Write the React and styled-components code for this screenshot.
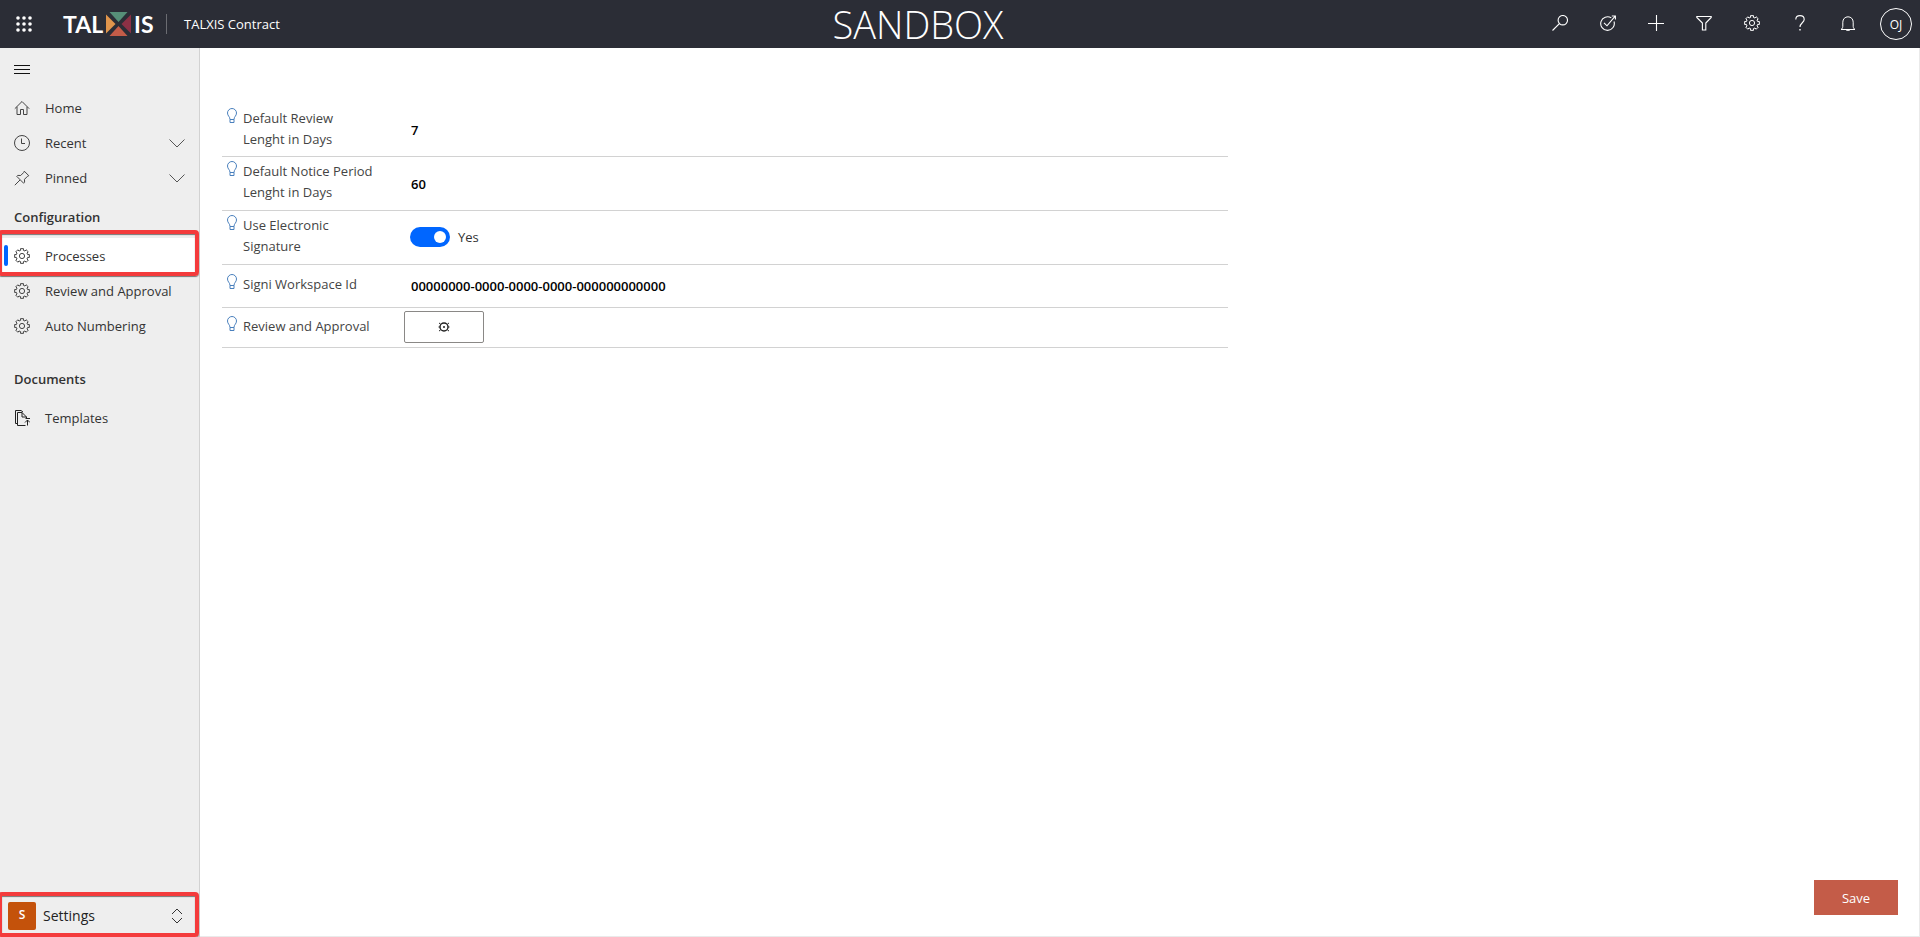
import React, { useState } from "react";
import styled, { createGlobalStyle, css } from "styled-components";

const GlobalStyle = createGlobalStyle`
  *, *::before, *::after { box-sizing: border-box; }
  body {
    margin: 0;
    font-family: "Segoe UI", "Open Sans", "Noto Sans", sans-serif;
    font-size: 13px;
    color: #333;
    background: #fff;
  }
  button, input { font: inherit; color: inherit; }
`;

const Page = styled.div`
  display: flex;
  flex-direction: column;
  min-height: 100vh;
`;

const Header = styled.header`
  display: flex;
  align-items: center;
  height: 48px;
  background: #2b2d36;
  color: #fff;
`;

const Brand = styled.div`
  display: flex;
  align-items: center;
  width: 300px;
`;

const IconButton = styled.button`
  display: flex;
  align-items: center;
  justify-content: center;
  width: 48px;
  height: 48px;
  padding: 0;
  border: 0;
  background: none;
  cursor: pointer;
`;

const ActionButton = styled(IconButton)`
  padding-bottom: 2px;
`;

const Logo = styled.a`
  display: flex;
  align-items: center;
  gap: 3px;
  width: 102px;
  height: 24px;
  margin-left: 15px;
  color: #fff;
  text-decoration: none;
  font: 700 23px/24px Lato, sans-serif;
`;

const AppName = styled.span`
  display: flex;
  align-items: center;
  gap: 17px;
  height: 20px;
  margin-left: 1px;
  line-height: 20px;
  white-space: nowrap;
  &::before {
    content: "";
    width: 1px;
    height: 20px;
    background: #6b6c72;
  }
`;

const Banner = styled.div`
  flex: 1;
  text-align: center;
  font-size: 38px;
  font-weight: 300;
  line-height: 46px;
`;

const HeaderActions = styled.div`
  display: flex;
`;

const Avatar = styled.span`
  display: flex;
  align-items: center;
  justify-content: center;
  width: 32px;
  height: 32px;
  border: 1px solid #fff;
  border-radius: 50%;
  font-size: 12px;
`;

const Body = styled.div`
  display: flex;
  flex: 1;
`;

const Sidebar = styled.nav`
  display: flex;
  flex-direction: column;
  width: 200px;
  flex-shrink: 0;
  background: #eee;
  border-right: 1px solid #d2d2d2;
`;

const MenuToggle = styled.button`
  display: flex;
  align-items: center;
  height: 42px;
  padding: 0 14px;
  border: 0;
  background: none;
`;

const NavList = styled.ul`
  list-style: none;
  margin: 0;
  padding: 0 0 1px;
`;

const GroupTitle = styled.h2`
  margin: 0;
  padding: 0 14px;
  font-size: 13px;
  font-weight: 600;
  line-height: 42px;
`;

const Group = styled.section`
  & + & { padding-top: 14px; }
`;

const highlight = css`
  content: "";
  position: absolute;
  left: -2px;
  right: 0;
  border: 4px solid #f43b3c;
  border-radius: 4px;
  box-shadow: 0 1px 1px #777, inset 0 1px 1px #777;
  pointer-events: none;
`;

const NavRow = styled.li`
  position: relative;
  background: ${(p) => (p.$active ? "#fff" : "none")};
  ${(p) =>
    p.$active &&
    css`
      &::after {
        ${highlight}
        top: -8px;
        bottom: -3px;
      }
    `}
`;

const NavItem = styled.a`
  display: grid;
  grid-template-columns: 16px 1fr 16px;
  align-items: center;
  column-gap: 15px;
  height: 35px;
  padding: 0 14px;
  color: inherit;
  text-decoration: none;
  white-space: nowrap;
`;

const ActiveBar = styled.span`
  position: absolute;
  left: 4px;
  top: 7px;
  width: 4px;
  height: 21px;
  border-radius: 2px;
  background: #0066ff;
`;

const AreaSwitcher = styled.button`
  position: relative;
  display: grid;
  grid-template-columns: 28px 1fr 16px;
  align-items: center;
  column-gap: 7px;
  height: 43px;
  margin-top: auto;
  padding: 0 14px 0 8px;
  border: 0;
  background: none;
  color: #222;
  font-size: 14px;
  text-align: left;
  &::after {
    ${highlight}
    top: -2px;
    bottom: 0;
  }
`;

const AreaBadge = styled.span`
  height: 28px;
  border-radius: 2px;
  background: #c4520b;
  color: #fff;
  font-size: 12px;
  font-weight: 600;
  line-height: 26px;
  text-align: center;
`;

const Main = styled.main`
  display: flex;
  flex: 1;
  flex-direction: column;
  justify-content: space-between;
  min-width: 0;
  padding: 55px 21px 21px 22px;
  border: solid #eaeaea;
  border-width: 0 1px 1px 0;
`;

const Fields = styled.div`
  width: 60%;
`;

const Field = styled.div`
  display: flex;
  min-height: ${(p) => p.$height}px;
  padding-left: 5px;
  border-bottom: 1px solid #d2d2d2;
`;

const FieldLabel = styled.label`
  display: grid;
  grid-template-columns: 10px 132px;
  column-gap: 6px;
  align-items: start;
  width: 177px;
  padding-top: ${(p) => p.$top}px;
  color: #444;
  line-height: 21px;
`;

const FieldValue = styled.div`
  display: flex;
  flex: 1;
  align-items: center;
`;

const TextInput = styled.input`
  width: 100%;
  height: 32px;
  padding: 0 7px;
  border: 0;
  background: none;
  color: #000;
  font-weight: 600;
`;

const SwitchLabel = styled.label`
  display: flex;
  align-items: center;
  gap: 8px;
  padding: 0 0 2px 6px;
`;

const Switch = styled.input`
  appearance: none;
  display: flex;
  align-items: center;
  justify-content: ${(p) => (p.checked ? "flex-end" : "flex-start")};
  width: 40px;
  height: 20px;
  margin: 0;
  padding: 0 4px;
  border-radius: 10px;
  background: ${(p) => (p.checked ? "#0066ff" : "#8a8886")};
  &::before {
    content: "";
    width: 12px;
    height: 12px;
    border-radius: 50%;
    background: #fff;
  }
`;

const OutlineButton = styled.button`
  display: flex;
  align-items: center;
  justify-content: center;
  width: 80px;
  height: 32px;
  margin-bottom: 2px;
  border: 1px solid #8a8886;
  border-radius: 2px;
  background: #fff;
`;

const SaveButton = styled.button`
  align-self: flex-end;
  width: 84px;
  height: 35px;
  border: 0;
  background: #c45c48;
  color: #fff;
`;

const Icon = ({ size = 16, color = "#fff", children, w, h }) => (
  <svg width={w || size} height={h || size} viewBox={`0 0 ${w || size} ${h || size}`} fill="none" stroke={color} strokeWidth="1" aria-hidden="true">
    {children}
  </svg>
);

const gearPath = (() => {
  const teeth = 8;
  const pts = [];
  for (let i = 0; i < teeth; i++) {
    const a = (i * 2 * Math.PI) / teeth;
    [[-0.24, 5.8], [-0.2, 7.5], [0.2, 7.5], [0.24, 5.8]].forEach(([d, r]) => {
      pts.push(`${(8 + r * Math.sin(a + d)).toFixed(2)} ${(8 - r * Math.cos(a + d)).toFixed(2)}`);
    });
  }
  return `M${pts.join("L")}Z`;
})();

const Gear = ({ color = "#444" }) => (
  <Icon color={color}>
    <path d={gearPath} strokeLinejoin="round" />
    <circle cx="8" cy="8" r="2.6" />
  </Icon>
);

const Waffle = () => (
  <Icon>
    {[2, 8, 14].map((y) => [2, 8, 14].map((x) => <circle key={`${x}-${y}`} cx={x} cy={y} r="1.8" fill="#fff" stroke="none" />))}
  </Icon>
);

const LogoMark = () => (
  <svg width="25" height="24" viewBox="0 0 25 24" aria-hidden="true">
    <path d="M3.5 0h18L12.5 10z" fill="#568f78" />
    <path d="M0 2.5v19L9.5 12z" fill="#e0954c" />
    <path d="M25 2.5v19L15.5 12z" fill="#8c3045" />
    <path d="M3.5 24h18L12.5 14z" fill="#c45c48" />
  </svg>
);

const Search = () => (
  <Icon>
    <circle cx="10.8" cy="5.2" r="4.7" strokeWidth="1.1" />
    <path d="M7.4 8.6L.5 15.5" strokeWidth="1.1" />
  </Icon>
);
const Target = () => (
  <Icon>
    <path d="M11.3 2.9A6.8 6.8 0 1 0 14 6.5" strokeWidth="1.1" />
    <path d="M4 7.8l3 3L15.2 1.2M11.8 1h3.6v3.5" strokeWidth="1.1" />
  </Icon>
);
const Plus = () => (
  <Icon>
    <path d="M8.5 0v16M0 8.5h16" strokeWidth="1.1" />
  </Icon>
);
const Filter = () => (
  <Icon>
    <path d="M.8 1.5h14.4v1L9.8 8v7H6.4V8L.8 2.5z" strokeWidth="1.1" />
  </Icon>
);
const Help = () => (
  <Icon w={10} h={16}>
    <path d="M.8 4.4C.8 2 2.5.6 5 .6s4.2 1.5 4.2 3.8C9.2 7.6 5 8 5 12" strokeWidth="1.1" />
    <path d="M5 14v1.5" strokeWidth="1.4" />
  </Icon>
);
const Bell = () => (
  <Icon>
    <path d="M1 14.5h14c-1-.7-1.8-1.6-1.8-3.2V7.2C13.2 4 11 1.8 8 1.8S2.8 4 2.8 7.2v4.1C2.8 12.9 2 13.8 1 14.5z" />
    <path d="M6 14.6c.2 1.6 3.8 1.6 4 0" />
  </Icon>
);
const Menu = () => (
  <Icon color="#111">
    <path d="M0 4.5h16M0 8.5h16M0 12.5h16" />
  </Icon>
);
const Home = () => (
  <Icon color="#444">
    <path d="M.8 8.7L8 1.5l7.2 7.2M3 6.8v7.7h3.5v-5h3v5H13V6.8" />
  </Icon>
);
const Clock = () => (
  <Icon color="#444">
    <circle cx="8" cy="8" r="7.5" />
    <path d="M7.5 3.5v5H11" />
  </Icon>
);
const Pin = () => (
  <Icon color="#444">
    <path d="M10.3 1.2l4.5 4.5-1.3.6-3 3 .1 3-1 .9-6.8-6.8.9-1 3 .1 3-3zM6 10L.8 15.2" />
  </Icon>
);
const Chevron = () => (
  <Icon color="#555">
    <path d="M.5 4.5L8 12l7.500-7.500" />
  </Icon>
);
const UpDown = () => (
  <Icon color="#333">
    <path d="M3 6l5-5 5 5M3 10l5 5 5-5" />
  </Icon>
);
const Templates = () => (
  <Icon color="#222">
    <path d="M3.5 13.5h-2V.5h5.5L9 2M11.5 15.5h-8v-13H8L12.5 7v1M8 2.5V7h4.5M13.5 15.5V10M11 12.5l2.5-2.5 2.5 2.5M11.5 8.500H16" />
  </Icon>
);
const Bulb = () => (
  <Icon w={10} h={16} color="#4a80bd">
    <path d="M3 11.5C3 8.5.5 8 .5 5a4.5 4.5 0 0 1 9 0c0 3-2.5 3.5-2.5 6.5zM3 11.5v3h4v-3" />
  </Icon>
);
const SmallGear = () => (
  <Icon size={12} color="#222">
    <circle cx="6" cy="6" r="4" strokeWidth="1.4" />
    <circle cx="6" cy="6" r="1" fill="#222" stroke="none" />
    <path d="M1 2l1.500 1M11 2L9.500 3M1 10l1.500-1M11 10L9.500 9M.500 6h1.500M10 6h1.500" />
  </Icon>
);

const actions = [
  ["Search", Search],
  ["Tasks", Target],
  ["New", Plus],
  ["Filter", Filter],
  ["Settings", () => <Gear color="#fff" />],
  ["Help", Help],
  ["Notifications", Bell],
];

const mainNav = [
  { label: "Home", icon: Home },
  { label: "Recent", icon: Clock, expandable: true },
  { label: "Pinned", icon: Pin, expandable: true },
];

const groups = [
  {
    title: "Configuration",
    items: [
      { label: "Processes", icon: Gear, active: true },
      { label: "Review and Approval", icon: Gear },
      { label: "Auto Numbering", icon: Gear },
    ],
  },
  { title: "Documents", items: [{ label: "Templates", icon: Templates }] },
];

const Nav = ({ items }) => (
  <NavList>
    {items.map(({ label, icon: ItemIcon, active, expandable }) => (
      <NavRow key={label} $active={active}>
        {active && <ActiveBar />}
        <NavItem href="#" aria-current={active ? "page" : undefined}>
          <ItemIcon />
          <span>{label}</span>
          {expandable && <Chevron />}
        </NavItem>
      </NavRow>
    ))}
  </NavList>
);

const FormField = ({ id, label, height, top, children }) => (
  <Field $height={height}>
    <FieldLabel htmlFor={id} $top={top}>
      <Bulb />
      <span>{label}</span>
    </FieldLabel>
    <FieldValue>{children}</FieldValue>
  </Field>
);

export default function App() {
  const [signature, setSignature] = useState(true);
  return (
    <Page>
      <GlobalStyle />
      <Header>
        <Brand>
          <IconButton aria-label="Apps"><Waffle /></IconButton>
          <Logo href="#" aria-label="TALXIS">
            <span>TAL</span>
            <LogoMark />
            <span>IS</span>
          </Logo>
          <AppName>TALXIS Contract</AppName>
        </Brand>
        <Banner>SANDBOX</Banner>
        <HeaderActions>
          {actions.map(([name, ActionIcon]) => (
            <ActionButton key={name} aria-label={name}><ActionIcon /></ActionButton>
          ))}
          <IconButton aria-label="Account"><Avatar>OJ</Avatar></IconButton>
        </HeaderActions>
      </Header>
      <Body>
        <Sidebar>
          <MenuToggle aria-label="Toggle menu"><Menu /></MenuToggle>
          <Nav items={mainNav} />
          {groups.map((g) => (
            <Group key={g.title}>
              <GroupTitle>{g.title}</GroupTitle>
              <Nav items={g.items} />
            </Group>
          ))}
          <AreaSwitcher>
            <AreaBadge>S</AreaBadge>
            <span>Settings</span>
            <UpDown />
          </AreaSwitcher>
        </Sidebar>
        <Main>
          <Fields>
            <FormField id="review" label="Default Review Lenght in Days" height={54} top={5}>
              <TextInput id="review" defaultValue="7" />
            </FormField>
            <FormField id="notice" label="Default Notice Period Lenght in Days" height={54} top={4}>
              <TextInput id="notice" defaultValue="60" />
            </FormField>
            <FormField id="signature" label="Use Electronic Signature" height={54} top={4}>
              <SwitchLabel>
                <Switch
                  id="signature"
                  type="checkbox"
                  role="switch"
                  checked={signature}
                  onChange={(e) => setSignature(e.target.checked)}
                />
                {signature ? "Yes" : "No"}
              </SwitchLabel>
            </FormField>
            <FormField id="workspace" label="Signi Workspace Id" height={43} top={9}>
              <TextInput id="workspace" defaultValue="00000000-0000-0000-0000-000000000000" />
            </FormField>
            <FormField id="approval" label="Review and Approval" height={40} top={8}>
              <OutlineButton id="approval"><SmallGear /></OutlineButton>
            </FormField>
          </Fields>
          <SaveButton>Save</SaveButton>
        </Main>
      </Body>
    </Page>
  );
}
